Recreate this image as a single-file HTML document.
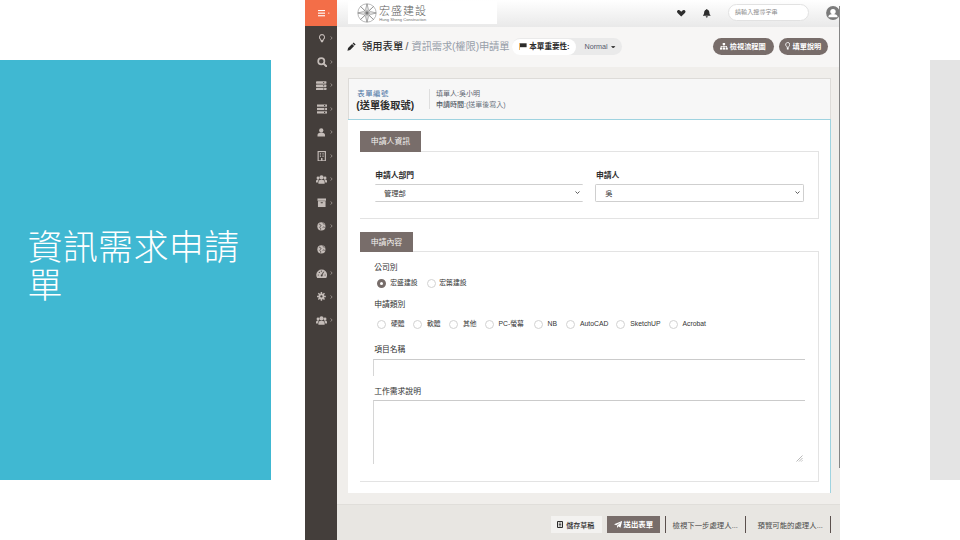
<!DOCTYPE html>
<html lang="zh-Hant">
<head>
<meta charset="utf-8">
<title>資訊需求申請單</title>
<style>
*{box-sizing:border-box;margin:0;padding:0}
html,body{width:960px;height:540px;overflow:hidden;background:#fff}
body{position:relative;font-family:"Liberation Sans","Noto Sans CJK TC",sans-serif;color:#333;-webkit-text-size-adjust:none}
.abs{position:absolute}
#blue{left:0;top:60px;width:271px;height:420px;background:#40b8d2}
#title{left:27.5px;top:229px;width:232px;color:#fff;font-weight:300;font-size:35px;line-height:38.4px;letter-spacing:.3px}
#grayr{left:930px;top:60px;width:30px;height:420px;background:#e4e4e4}
#shot{left:305px;top:0;width:535px;height:540px;overflow:hidden;background:#f0eeeb}
#side{left:0;top:0;width:32px;height:540px;background:#443e3b}
#burger{left:0;top:0;width:32px;height:26.3px;background:#f36e48}
#hdr{left:32px;top:0;width:503px;height:26.5px;background:linear-gradient(#ffffff,#f6f6f6 40%,#e9e9e9)}
#logo{left:43px;top:1px;width:149px;height:23px;background:#fff}
#trow{left:32px;top:26.5px;width:503px;height:40.5px;background:#f7f6f5}
#panel{left:43px;top:78px;width:483px;height:415px;background:#fff}
#phead{left:0;top:0;width:483px;height:41.5px;background:#f7f7f7;border:1px solid #dddbd8;border-bottom:none}
#pline{left:0;top:41px;width:483px;height:1px;background:#9fd3e0}
#pright{left:482px;top:41px;width:1px;height:374px;background:#9fd3e0}
#foot{left:32px;top:504px;width:503px;height:36px;background:#e8e6e2;border-top:1px solid #e0deda}
#edge{left:534.1px;top:6px;width:.9px;height:462px;background:#858585}
.t{position:absolute;white-space:nowrap;line-height:1}

.b{font-weight:700}
.tab{position:absolute;background:#786d6a;color:#f4f1ef;font-size:7.9px;text-align:center}
.box{position:absolute;border:1px solid #e3e3e3;border-left:none;background:#fff}
.lbl{position:absolute;white-space:nowrap;line-height:1;font-size:7.8px;font-weight:700;color:#2f2f2f}
.sel{position:absolute;border:1px solid #cfcfcf;background:#fff;height:17.5px;border-radius:1.2px}
.sel span{position:absolute;left:9px;top:5px;font-size:7.3px;line-height:1;color:#333}
.inp{position:absolute;border-top:1px solid #cbcbcb;border-left:1px solid #d6d6d6;background:#fff}
.rad{position:absolute;width:9px;height:9px;border-radius:50%;border:.8px solid #d2d2d2;background:#fff}
.rl{position:absolute;white-space:nowrap;line-height:1;font-size:6.8px;color:#333}
.pill{position:absolute;border-radius:9px;background:#786d6a;color:#fff;height:17.2px}
.vd{position:absolute;width:1px;background:#5b504d}
</style>
</head>
<body>
<div id="blue" class="abs"></div>
<div id="title" class="abs">資訊需求申請單</div>
<div id="grayr" class="abs"></div>

<div id="shot" class="abs">
  <div id="side" class="abs"></div>
  <div id="burger" class="abs"></div>
    <svg class="abs" style="left:12.50px;top:33.90px" width="8.00" height="8.80" viewBox="0 0 10 11"><path d="M5 0.800a3.200 3.200 0 0 0-2 5.700c.5.5.7 1 .7 1.600h2.600c0-.6.2-1.100.7-1.600a3.200 3.200 0 0 0-2-5.700z" fill="none" stroke="#c4bcb8" stroke-width="1.300"/><rect x="3.500" y="8.500" width="3" height="1.800" rx=".6" fill="#c4bcb8"/></svg>
    <svg class="abs" style="left:25.2px;top:36.30px" width="3" height="4" viewBox="0 0 3 4"><path d="M0.500 0.400l1.700 1.600-1.700 1.600" fill="none" stroke="#b0a7a3" stroke-width=".7"/></svg>
    <svg class="abs" style="left:11.50px;top:56.80px" width="10.00" height="10.00" viewBox="0 0 10 10"><circle cx="4.300" cy="4.300" r="3.100" fill="none" stroke="#c4bcb8" stroke-width="1.700"/><path d="M6.600 6.600l3 3" stroke="#c4bcb8" stroke-width="2" stroke-linecap="round"/></svg>
    <svg class="abs" style="left:25.2px;top:59.80px" width="3" height="4" viewBox="0 0 3 4"><path d="M0.500 0.400l1.700 1.600-1.700 1.600" fill="none" stroke="#b0a7a3" stroke-width=".7"/></svg>
    <svg class="abs" style="left:11.28px;top:80.55px" width="10.45" height="9.50" viewBox="0 0 11 10"><rect x="0" y="0.300" width="11" height="2.600" rx=".5" fill="#c4bcb8"/><rect x="0" y="3.700" width="11" height="2.600" rx=".5" fill="#c4bcb8"/><rect x="0" y="7.100" width="11" height="2.600" rx=".5" fill="#c4bcb8"/><rect x="7.600" y="1" width="1" height="1.200" fill="#443e3b"/><rect x="7.600" y="4.400" width="1" height="1.200" fill="#443e3b"/><rect x="7.600" y="7.800" width="1" height="1.200" fill="#443e3b"/></svg>
    <svg class="abs" style="left:25.2px;top:83.30px" width="3" height="4" viewBox="0 0 3 4"><path d="M0.500 0.400l1.700 1.600-1.700 1.600" fill="none" stroke="#b0a7a3" stroke-width=".7"/></svg>
    <svg class="abs" style="left:11.50px;top:103.80px" width="10.00" height="10.00" viewBox="0 0 10 10"><rect x="0" y="0.500" width="10" height="2.200" fill="#c4bcb8"/><rect x="0" y="3.900" width="10" height="2.200" fill="#c4bcb8"/><rect x="0" y="7.300" width="10" height="2.200" fill="#c4bcb8"/><rect x="7" y="1" width="1.200" height="1.200" fill="#443e3b"/><rect x="7" y="4.400" width="1.200" height="1.200" fill="#443e3b"/><rect x="7" y="7.800" width="1.200" height="1.200" fill="#443e3b"/></svg>
    <svg class="abs" style="left:25.2px;top:106.80px" width="3" height="4" viewBox="0 0 3 4"><path d="M0.500 0.400l1.700 1.600-1.700 1.600" fill="none" stroke="#b0a7a3" stroke-width=".7"/></svg>
    <svg class="abs" style="left:12.25px;top:128.05px" width="8.50" height="8.50" viewBox="0 0 10 10"><circle cx="5" cy="2.800" r="2.500" fill="#c4bcb8"/><path d="M0.600 10v-1.800c0-1.800 1.600-2.900 4.400-2.900s4.400 1.100 4.400 2.900v1.800z" fill="#c4bcb8"/></svg>
    <svg class="abs" style="left:25.2px;top:130.30px" width="3" height="4" viewBox="0 0 3 4"><path d="M0.500 0.400l1.700 1.600-1.700 1.600" fill="none" stroke="#b0a7a3" stroke-width=".7"/></svg>
    <svg class="abs" style="left:11.75px;top:150.58px" width="9.50" height="10.45" viewBox="0 0 10 11"><rect x="1.200" y="0.600" width="7.600" height="9.800" fill="none" stroke="#c4bcb8" stroke-width="1.200"/><rect x="3" y="2.400" width="1.300" height="1.300" fill="#c4bcb8"/><rect x="5.700" y="2.400" width="1.300" height="1.300" fill="#c4bcb8"/><rect x="3" y="4.800" width="1.300" height="1.300" fill="#c4bcb8"/><rect x="5.700" y="4.800" width="1.300" height="1.300" fill="#c4bcb8"/><rect x="4.200" y="7.400" width="1.600" height="3" fill="#c4bcb8"/></svg>
    <svg class="abs" style="left:25.2px;top:153.80px" width="3" height="4" viewBox="0 0 3 4"><path d="M0.500 0.400l1.700 1.600-1.700 1.600" fill="none" stroke="#b0a7a3" stroke-width=".7"/></svg>
    <svg class="abs" style="left:10.98px;top:174.70px" width="11.04" height="9.20" viewBox="0 0 12 10"><circle cx="6" cy="2.600" r="2.300" fill="#c4bcb8"/><circle cx="2.200" cy="3.200" r="1.600" fill="#c4bcb8"/><circle cx="9.800" cy="3.200" r="1.600" fill="#c4bcb8"/><path d="M2.600 9.500v-1.600c0-1.700 1.300-2.600 3.400-2.600s3.400.9 3.400 2.600v1.600z" fill="#c4bcb8"/><path d="M0 8.200v-1.300c0-1.200.9-1.900 2.200-1.900.4 0 .8.100 1.100.2-.8.600-1.300 1.500-1.300 2.700v.3zM12 8.200v-1.300c0-1.200-.9-1.900-2.200-1.900-.4 0-.8.100-1.100.2.800.6 1.300 1.500 1.300 2.700v.3z" fill="#c4bcb8"/></svg>
    <svg class="abs" style="left:25.2px;top:177.30px" width="3" height="4" viewBox="0 0 3 4"><path d="M0.500 0.400l1.700 1.600-1.700 1.600" fill="none" stroke="#b0a7a3" stroke-width=".7"/></svg>
    <svg class="abs" style="left:11.75px;top:198.05px" width="9.50" height="9.50" viewBox="0 0 10 10"><rect x="0.500" y="0.500" width="9" height="2.400" fill="#c4bcb8"/><rect x="1" y="3.300" width="8" height="6.200" fill="#c4bcb8"/><rect x="3.800" y="4.400" width="2.400" height="1" rx=".4" fill="#443e3b"/></svg>
    <svg class="abs" style="left:25.2px;top:200.80px" width="3" height="4" viewBox="0 0 3 4"><path d="M0.500 0.400l1.700 1.600-1.700 1.600" fill="none" stroke="#b0a7a3" stroke-width=".7"/></svg>
    <svg class="abs" style="left:12.10px;top:221.90px" width="8.80" height="8.80" viewBox="0 0 10 10"><circle cx="5" cy="5" r="4.600" fill="#c4bcb8"/><path d="M2.200 2.600c1-.3 1.800.3 2.200 1.100.3.700-.4 1.300-1 1.700-.5.400-.3 1.200.3 1.500.7.300.8 1.200.4 1.900M6.300 1c.4.900 1.500 1.100 2.200 1.700M6.400 6.200c.6-.8 1.800-.6 2.400.1" fill="none" stroke="#443e3b" stroke-width=".9"/></svg>
    <svg class="abs" style="left:25.2px;top:224.30px" width="3" height="4" viewBox="0 0 3 4"><path d="M0.500 0.400l1.700 1.600-1.700 1.600" fill="none" stroke="#b0a7a3" stroke-width=".7"/></svg>
    <svg class="abs" style="left:12.10px;top:245.40px" width="8.80" height="8.80" viewBox="0 0 10 10"><circle cx="5" cy="5" r="4.600" fill="#c4bcb8"/><path d="M2.200 2.600c1-.3 1.800.3 2.200 1.100.3.700-.4 1.300-1 1.700-.5.400-.3 1.200.3 1.500.7.300.8 1.200.4 1.900M6.300 1c.4.900 1.500 1.100 2.200 1.700M6.400 6.200c.6-.8 1.800-.6 2.400.1" fill="none" stroke="#443e3b" stroke-width=".9"/></svg>
    <svg class="abs" style="left:10.80px;top:268.55px" width="11.40" height="9.50" viewBox="0 0 12 10"><path d="M1.500 9.800a5.700 5.700 0 1 1 9 0z" fill="#c4bcb8"/><path d="M6 6.800l1.900-3.600" stroke="#443e3b" stroke-width="1" stroke-linecap="round"/><circle cx="6" cy="6.900" r="1" fill="#443e3b"/><circle cx="2.400" cy="6.300" r=".6" fill="#443e3b"/><circle cx="3.500" cy="3.600" r=".6" fill="#443e3b"/><circle cx="9.600" cy="6.300" r=".6" fill="#443e3b"/><circle cx="5.600" cy="2.300" r=".6" fill="#443e3b"/></svg>
    <svg class="abs" style="left:25.2px;top:271.30px" width="3" height="4" viewBox="0 0 3 4"><path d="M0.500 0.400l1.700 1.600-1.700 1.600" fill="none" stroke="#b0a7a3" stroke-width=".7"/></svg>
    <svg class="abs" style="left:12.10px;top:292.40px" width="8.80" height="8.80" viewBox="0 0 10 10"><circle cx="5" cy="5" r="3.300" fill="#c4bcb8"/><g stroke="#c4bcb8" stroke-width="1.700"><path d="M5 0v10M0 5h10M1.500 1.500l7 7M8.500 1.500l-7 7"/></g><circle cx="5" cy="5" r="1.300" fill="#443e3b"/></svg>
    <svg class="abs" style="left:25.2px;top:294.80px" width="3" height="4" viewBox="0 0 3 4"><path d="M0.500 0.400l1.700 1.600-1.700 1.600" fill="none" stroke="#b0a7a3" stroke-width=".7"/></svg>
    <svg class="abs" style="left:10.98px;top:315.70px" width="11.04" height="9.20" viewBox="0 0 12 10"><circle cx="6" cy="2.600" r="2.300" fill="#c4bcb8"/><circle cx="2.200" cy="3.200" r="1.600" fill="#c4bcb8"/><circle cx="9.800" cy="3.200" r="1.600" fill="#c4bcb8"/><path d="M2.600 9.500v-1.600c0-1.700 1.300-2.600 3.400-2.600s3.400.9 3.400 2.600v1.600z" fill="#c4bcb8"/><path d="M0 8.200v-1.300c0-1.200.9-1.900 2.200-1.900.4 0 .8.100 1.100.2-.8.600-1.300 1.500-1.300 2.700v.3zM12 8.200v-1.300c0-1.200-.9-1.900-2.200-1.900-.4 0-.8.100-1.100.2.800.6 1.300 1.500 1.300 2.700v.3z" fill="#c4bcb8"/></svg>
    <svg class="abs" style="left:25.2px;top:318.30px" width="3" height="4" viewBox="0 0 3 4"><path d="M0.500 0.400l1.700 1.600-1.700 1.600" fill="none" stroke="#b0a7a3" stroke-width=".7"/></svg>
    <svg class="abs" style="left:12.500px;top:9.700px" width="13" height="7" viewBox="0 0 13 7"><rect x="0" y="0" width="7" height="1.100" fill="#fff"/><rect x="0" y="2.600" width="7" height="1.100" fill="#fff"/><rect x="0" y="5.200" width="7" height="1.100" fill="#fff"/><circle cx="10.800" cy="3.100" r=".6" fill="#fff"/></svg>
  <div id="hdr" class="abs"></div>
  <div id="logo" class="abs"></div>
  <svg class="abs" style="left:51.600px;top:2.700px" width="20" height="20" viewBox="0 0 20 20"><g fill="none" stroke="#777" stroke-width=".5"><circle cx="10" cy="10" r="9.200"/><path d="M10 .8v18.400M.8 10h18.400M3.500 3.500l13 13M16.500 3.500l-13 13"/><path d="M10 1l2 7 7 2-7 2-2 7-2-7-7-2 7-2z"/><path d="M3.500 3.500l5 4.500M16.500 3.500l-5 4.500M3.500 16.500l5-4.500M16.500 16.500l-5-4.500"/></g><path d="M10 6.500l.8 2.700 2.700.8-2.700.8-.8 2.700-.8-2.700-2.700-.8 2.700-.8z" fill="#777"/></svg><div class="t" style="left:74px;top:5.8px;font-size:11px;color:#5c5c5c;font-weight:300;letter-spacing:1px">宏盛建設</div><div class="t" style="left:74.3px;top:17.9px;font-size:4.1px;color:#6f6f6f;">Hung Sheng Construction</div><svg class="abs" style="left:372px;top:10px" width="8.500" height="6.500" viewBox="0 0 17 13"><path d="M8.500 13L1.200 5.800C-.4 4.200-.4 2 1.100 .9 2.700-.4 5-.1 6.500 1.400L8.500 3.300l2-1.900C12-.1 14.300-.4 15.900.9c1.500 1.100 1.500 3.300-.1 4.900z" fill="#2e2e2e"/></svg><svg class="abs" style="left:398px;top:9px" width="7.500" height="8.500" viewBox="0 0 15 17"><path d="M7.500 0c.8 0 1.300.6 1.300 1.300 2.400.6 3.900 2.600 3.900 5.200 0 3.300 1 4.800 2.300 5.900v1.100h-15v-1.100c1.300-1.100 2.300-2.600 2.300-5.900 0-2.600 1.500-4.600 3.900-5.200 0-.7.500-1.300 1.300-1.300zM5.500 14.500h4c0 1.400-.9 2.500-2 2.500s-2-1.100-2-2.500z" fill="#2e2e2e"/></svg><div class="abs" style="left:423px;top:4px;width:80.500px;height:16.600px;border:1px solid #e2e2e2;border-radius:8.500px;background:#fff"></div><div class="t" style="left:430px;top:9.3px;font-size:6.1px;color:#8d8d8d;">請輸入搜尋字串</div><svg class="abs" style="left:520.800px;top:5.800px" width="14" height="14" viewBox="0 0 14 14"><circle cx="7" cy="7" r="6.900" fill="#7b7b7b"/><circle cx="7" cy="5.600" r="2.700" fill="#fff"/><path d="M2.300 11.200c0-2.200 2-3.300 4.700-3.300s4.700 1.100 4.700 3.300z" fill="#fff"/></svg>
  <div id="trow" class="abs"></div>
  <svg class="abs" style="left:42.300px;top:41.800px" width="9.200" height="9.200" viewBox="0 0 17 17"><path d="M12.200 1l3.800 3.800-1.900 1.900-3.800-3.800zM9.400 3.800l3.800 3.800-7.400 7.400-5 1.200 1.200-5z" fill="#2b2b2b"/></svg><div class="t" style="left:57px;top:41.6px;font-size:10.3px;color:#2d2d2d;font-weight:500">領用表單</div><div class="t" style="left:100.6px;top:41.6px;font-size:10.3px;color:#555;">/</div><div class="t" style="left:106.5px;top:41.6px;font-size:10.3px;color:#98a0aa;letter-spacing:-.15px">資訊需求(權限)申請單</div><div class="abs" style="left:207px;top:38.300px;width:110px;height:17px;border-radius:8.500px;background:#eaeaea"></div><div class="abs" style="left:206.800px;top:38.800px;width:64.700px;height:16px;border-radius:8px;background:#fff"></div><svg class="abs" style="left:214px;top:43.300px" width="8" height="7" viewBox="0 0 8 7"><path d="M.4 0v7" stroke="#e8a33d" stroke-width=".9"/><path d="M1 .3h6.600v3.900h-6.600z" fill="#2b2b2b"/></svg><div class="t" style="left:224.3px;top:43.1px;font-size:7.55px;color:#2b2b2b;font-weight:700">本單重要性:</div><div class="t" style="left:279.5px;top:43.4px;font-size:7.2px;color:#54596b;">Normal</div><svg class="abs" style="left:306.300px;top:45.600px" width="4.400" height="2.800" viewBox="0 0 44 28"><path d="M0 0h44l-22 28z" fill="#444"/></svg><div class="pill" style="left:407.800px;top:38px;width:61.300px"></div><svg class="abs" style="left:415px;top:42.800px" width="7.800" height="7" viewBox="0 0 78 70"><g fill="#fff"><rect x="27" y="0" width="24" height="20"/><rect x="0" y="46" width="22" height="20"/><rect x="28" y="46" width="22" height="20"/><rect x="56" y="46" width="22" height="20"/><rect x="8" y="30" width="62" height="7"/><rect x="36" y="18" width="7" height="16"/><rect x="8" y="30" width="7" height="18"/><rect x="63" y="30" width="7" height="18"/><rect x="36" y="30" width="7" height="18"/></g></svg><div class="t" style="left:424.8px;top:43px;font-size:7.2px;color:#fff;font-weight:700">檢視流程圖</div><div class="pill" style="left:473.800px;top:38px;width:49.200px"></div><svg class="abs" style="left:479.800px;top:42.300px" width="5.500" height="8" viewBox="0 0 11 16"><path d="M5.500 1a4.200 4.200 0 0 0-2.600 7.500c.6.600.9 1.400.9 2.200h3.400c0-.8.300-1.600.9-2.200a4.200 4.200 0 0 0-2.600-7.500z" fill="none" stroke="#fff" stroke-width="1.700"/><rect x="3.600" y="12" width="3.800" height="2.800" rx="1" fill="#fff"/></svg><div class="t" style="left:487.5px;top:43px;font-size:7.2px;color:#fff;font-weight:700">填單說明</div>
  <div id="panel" class="abs">
    <div id="phead" class="abs"></div>
    <div id="pline" class="abs"></div>
    <div id="pright" class="abs"></div>
    <div class="t" style="left:9.2px;top:12px;font-size:7.4px;color:#4f78a6;letter-spacing:.55px">表單編號</div><div class="t" style="left:8.3px;top:22.5px;font-size:10.2px;color:#2d2d2d;font-weight:700">(送單後取號)</div><div class="abs" style="left:80.500px;top:10.500px;width:1px;height:20.500px;background:#dedede"></div><div class="t" style="left:88px;top:12px;font-size:7px;color:#5d6570;">填單人:吳小明</div><div class="t" style="left:88px;top:22.6px;font-size:7px;color:#69727e;"><span style="color:#4d545e;font-weight:500">申請時間</span>:(送單後寫入)</div><div class="box" style="left:12px;top:73.200px;width:458.700px;height:68.200px"></div><div class="tab" style="left:12.200px;top:53px;width:60.700px;height:20.700px;line-height:22.200px">申請人資訊</div><div class="lbl" style="left:27.200px;top:94.200px">申請人部門</div><div class="sel" style="left:27px;top:106px;width:208px;border-left:none;border-right:none"><span>管理部</span></div><div class="lbl" style="left:248px;top:94.200px">申請人</div><div class="sel" style="left:247.300px;top:106px;width:208.500px"><span>吳</span></div><svg class="abs" style="left:226.5px;top:113.300px" width="5" height="3.200" viewBox="0 0 50 32"><path d="M5 5l20 20 20-20" fill="none" stroke="#333" stroke-width="8"/></svg><svg class="abs" style="left:447.3px;top:113.300px" width="5" height="3.200" viewBox="0 0 50 32"><path d="M5 5l20 20 20-20" fill="none" stroke="#333" stroke-width="8"/></svg><div class="box" style="left:12px;top:173.300px;width:458.700px;height:231px"></div><div class="tab" style="left:12.200px;top:154px;width:52.500px;height:19.800px;line-height:21.200px">申請內容</div><div class="lbl" style="left:26.200px;top:186.200px;font-weight:400">公司別</div><div class="rad" style="left:29.200px;top:200.500px;border:3px solid #776d6a"></div><div class="rl" style="left:42.300px;top:201.800px">宏盛建設</div><div class="rad" style="left:78.700px;top:200.500px"></div><div class="rl" style="left:91.300px;top:201.800px">宏築建設</div><div class="lbl" style="left:26.200px;top:223.300px;font-weight:400">申請類別</div><div class="rad" style="left:28.5px;top:241.900px"></div><div class="rl" style="left:43.0px;top:243.200px">硬體</div><div class="rad" style="left:64.7px;top:241.900px"></div><div class="rl" style="left:79.0px;top:243.200px">軟體</div><div class="rad" style="left:100.8px;top:241.900px"></div><div class="rl" style="left:115.0px;top:243.200px">其他</div><div class="rad" style="left:136.7px;top:241.900px"></div><div class="rl" style="left:150.5px;top:243.200px">PC-螢幕</div><div class="rad" style="left:185.8px;top:241.900px"></div><div class="rl" style="left:199.5px;top:243.200px">NB</div><div class="rad" style="left:218.0px;top:241.900px"></div><div class="rl" style="left:232.0px;top:243.200px">AutoCAD</div><div class="rad" style="left:268.3px;top:241.900px"></div><div class="rl" style="left:282.3px;top:243.200px">SketchUP</div><div class="rad" style="left:320.9px;top:241.900px"></div><div class="rl" style="left:334.5px;top:243.200px">Acrobat</div><div class="lbl" style="left:26.200px;top:267.800px;font-weight:400">項目名稱</div><div class="inp" style="left:25px;top:281px;width:432px;height:16.500px"></div><div class="lbl" style="left:26.200px;top:309.500px;font-weight:400">工作需求說明</div><div class="inp" style="left:25px;top:322px;width:432px;height:64px"></div><svg class="abs" style="left:447.500px;top:377px" width="7" height="7" viewBox="0 0 7 7"><path d="M6.500 .5l-6 6M6.500 3l-3.500 3.500M6.500 5.300l-1.200 1.200" stroke="#8a8a8a" stroke-width=".6"/></svg>
  </div>
  <div id="foot" class="abs"></div>
  <div class="abs" style="left:246.300px;top:515.800px;width:51px;height:17.100px;background:#f3f2f0"></div><svg class="abs" style="left:252px;top:521px" width="6" height="7" viewBox="0 0 12 14"><path d="M1 1h10v12h-10z" fill="none" stroke="#2b2b2b" stroke-width="2"/><path d="M3.500 4.200h5M3.500 7h5M3.500 9.800h5" stroke="#2b2b2b" stroke-width="1.500"/></svg><div class="t" style="left:261.3px;top:521.5px;font-size:7px;color:#2b2b2b;font-weight:500">儲存草稿</div><div class="abs" style="left:302.200px;top:515.800px;width:52.800px;height:17.100px;background:#786d6a"></div><svg class="abs" style="left:309px;top:520.800px" width="8.200" height="7.600" viewBox="0 0 15 14"><path d="M15 0l-3.200 12.500-3.900-2.600-1.900 3.300-.6-4.500 7.300-6.600-8.700 5.600-4-1.700z" fill="#fff"/></svg><div class="t" style="left:318.5px;top:521.2px;font-size:7.4px;color:#fff;font-weight:700">送出表單</div><div class="vd" style="left:360.300px;top:516px;height:17px"></div><div class="t" style="left:367.5px;top:521.9px;font-size:7.4px;color:#4a4a4a;">檢視下一步處理人...</div><div class="vd" style="left:440.300px;top:516px;height:17px"></div><div class="t" style="left:452.5px;top:521.9px;font-size:7.4px;color:#4a4a4a;">預覽可能的處理人...</div><div class="vd" style="left:525.300px;top:516px;height:17px"></div>
  <div id="edge" class="abs"></div>
</div>
</body>
</html>
